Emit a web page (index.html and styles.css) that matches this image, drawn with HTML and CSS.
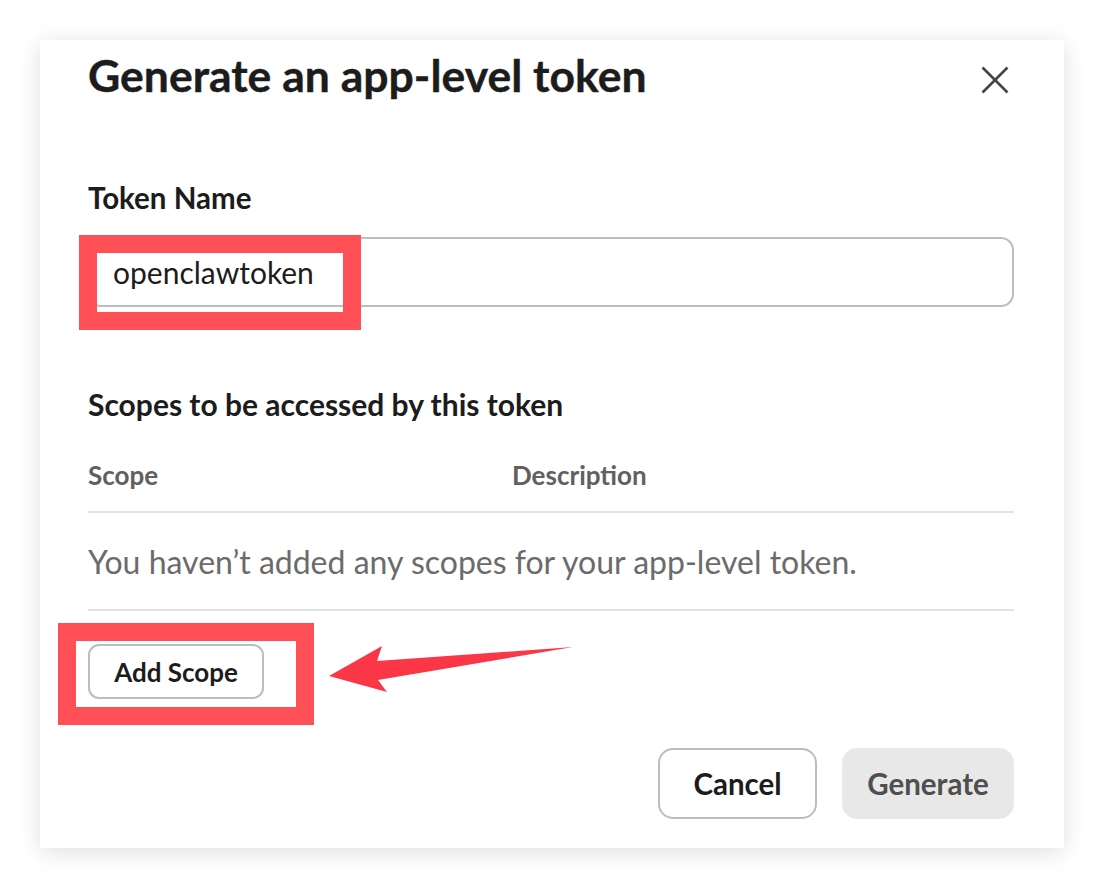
FILE: index.html
```html
<!DOCTYPE html>
<html lang="en">
<head>
<meta charset="utf-8">
<title>Generate an app-level token</title>
<link rel="stylesheet" href="styles.css">
</head>
<body>
<div class="page">
  <div class="dialog" role="dialog" aria-labelledby="dlg-title">
    <header class="dialog-header">
      <h1 id="dlg-title" class="dialog-title">Generate an app-level token</h1>
      <button class="close-btn" aria-label="Close">
        <svg width="28" height="28" viewBox="0 0 28 28" aria-hidden="true">
          <path d="M1.5 1.5 L26.5 26.5 M26.5 1.5 L1.5 26.5" stroke="#454545" stroke-width="2.6" stroke-linecap="butt" fill="none"/>
        </svg>
      </button>
    </header>

    <section class="field">
      <label class="field-label" for="token-name">Token Name</label>
      <div class="input-wrap">
        <div class="text-input" id="token-name">openclawtoken</div>
        <span class="mark mark-input"></span>
      </div>
    </section>

    <section class="scopes">
      <h2 class="scopes-title">Scopes to be accessed by this token</h2>
      <div class="table-head">
        <span>Scope</span>
        <span>Description</span>
      </div>
      <div class="table-empty">You haven’t added any scopes for your app-level token.</div>
      <div class="add-row">
        <div class="add-wrap">
          <button class="btn btn-add">Add Scope</button>
          <span class="mark mark-add"></span>
        </div>
      </div>
    </section>

    <footer class="dialog-footer">
      <button class="btn btn-cancel">Cancel</button>
      <button class="btn btn-generate">Generate</button>
    </footer>
  </div>

  <svg class="arrow" width="1104" height="888" viewBox="0 0 1104 888" aria-hidden="true">
    <polygon points="329,676 382,646 377,661 573,647 378,680 387,692" fill="#fa3647"/>
  </svg>
</div>
</body>
</html>
```

FILE: styles.css
```css
* {
  box-sizing: border-box;
}

html, body {
  margin: 0;
  padding: 0;
  background: #ffffff;
}

body {
  font-family: Lato, "Noto Sans", "Liberation Sans", sans-serif;
  color: #1d1c1d;
}

.page {
  position: relative;
  width: 1104px;
  height: 888px;
  padding: 40px;
}

.dialog {
  width: 1024px;
  height: 808px;
  background: #ffffff;
  box-shadow: 0 4px 22px rgba(0, 0, 0, 0.13);
  padding: 8px 50px 29px 48px;
  display: flex;
  flex-direction: column;
}

.dialog-header {
  display: flex;
  justify-content: space-between;
  align-items: flex-start;
}

.dialog-title {
  margin: 0;
  font-size: 44.5px;
  line-height: 53px;
  font-weight: 700;
  color: #1d1c1d;
  letter-spacing: 0;
  -webkit-text-stroke: 0.4px #1d1c1d;
}

.close-btn {
  margin: 18px 5px 0 0;
  padding: 0;
  border: none;
  background: transparent;
  width: 28px;
  height: 28px;
  display: flex;
}

.field {
  margin-top: 79px;
  display: flex;
  flex-direction: column;
}

.field-label {
  font-size: 29.5px;
  line-height: 35px;
  font-weight: 700;
  color: #1d1c1d;
}

.input-wrap {
  position: relative;
  margin-top: 22px;
}

.text-input {
  height: 70px;
  border: 2px solid #bdbdbd;
  border-radius: 13px;
  padding: 0 23px;
  display: flex;
  align-items: center;
  font-size: 30px;
  color: #1d1c1d;
}

.mark {
  position: absolute;
  border: 18px solid #ff4f57;
  pointer-events: none;
}

.mark-input {
  left: -9px;
  top: -2px;
  width: 282px;
  height: 95px;
}

.scopes {
  margin-top: 79px;
  display: flex;
  flex-direction: column;
}

.scopes-title {
  margin: 0;
  font-size: 30px;
  line-height: 36px;
  font-weight: 700;
  color: #1d1c1d;
}

.table-head {
  margin-top: 38px;
  display: grid;
  grid-template-columns: 424px 1fr;
  font-size: 26px;
  line-height: 31px;
  font-weight: 700;
  color: #616061;
  padding-bottom: 20px;
  border-bottom: 2px solid #e2e2e2;
}

.table-empty {
  font-size: 32px;
  line-height: 38px;
  color: #6b6b6b;
  padding: 30px 0 28px;
  border-bottom: 2px solid #e2e2e2;
}

.add-row {
  margin-top: 33px;
  display: flex;
}

.add-wrap {
  position: relative;
}

.btn {
  font-family: Lato, "Noto Sans", "Liberation Sans", sans-serif;
  font-weight: 700;
  background: #ffffff;
  color: #1d1c1d;
  border: 2px solid #bdbdbd;
  display: flex;
  align-items: center;
  justify-content: center;
  padding: 0;
}

.btn-add {
  width: 176px;
  height: 55px;
  border-radius: 11px;
  font-size: 26px;
}

.mark-add {
  left: -30px;
  top: -21px;
  width: 256px;
  height: 102px;
}

.dialog-footer {
  margin-top: 49px;
  display: flex;
  justify-content: flex-end;
  gap: 25px;
}

.btn-cancel,
.btn-generate {
  height: 71px;
  border-radius: 15px;
  font-size: 29.5px;
}

.btn-cancel {
  width: 159px;
}

.btn-generate {
  width: 172px;
  background: #e8e8e8;
  border-color: #e8e8e8;
  color: #4f4f4f;
}

.arrow {
  position: absolute;
  left: 0;
  top: 0;
  pointer-events: none;
}
```
